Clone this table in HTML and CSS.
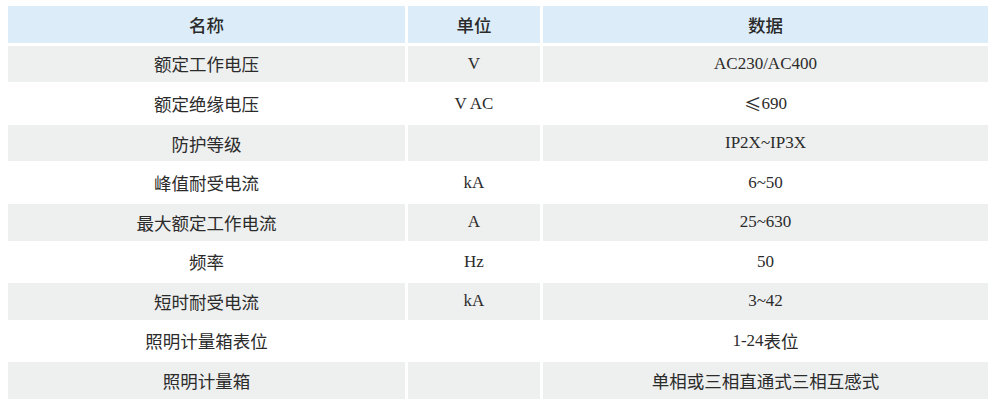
FILE: index.html
```
<!DOCTYPE html>
<html lang="zh-CN">
<head>
<meta charset="utf-8">
<link rel="stylesheet" href="styles.css">
</head>
<body>
<div class="spec">
  <div class="cell head"><span class="zh">名称</span></div><div class="cell head"><span class="zh">单位</span></div><div class="cell head"><span class="zh">数据</span></div>
  <div class="cell grey"><span class="zh">额定工作电压</span></div><div class="cell grey">V</div><div class="cell grey">AC230/AC400</div>
  <div class="cell"><span class="zh">额定绝缘电压</span></div><div class="cell">V AC</div><div class="cell"><span class="zh">≤</span>690</div>
  <div class="cell grey"><span class="zh">防护等级</span></div><div class="cell grey"></div><div class="cell grey">IP2X~IP3X</div>
  <div class="cell"><span class="zh">峰值耐受电流</span></div><div class="cell">kA</div><div class="cell">6~50</div>
  <div class="cell grey"><span class="zh">最大额定工作电流</span></div><div class="cell grey">A</div><div class="cell grey">25~630</div>
  <div class="cell"><span class="zh">频率</span></div><div class="cell">Hz</div><div class="cell">50</div>
  <div class="cell grey"><span class="zh">短时耐受电流</span></div><div class="cell grey">kA</div><div class="cell grey">3~42</div>
  <div class="cell"><span class="zh">照明计量箱表位</span></div><div class="cell"></div><div class="cell">1-24<span class="zh">表位</span></div>
  <div class="cell grey"><span class="zh">照明计量箱</span></div><div class="cell grey"></div><div class="cell grey"><span class="zh">单相或三相直通式三相互感式</span></div>
</div>
</body>
</html>
```
FILE: styles.css
```
html, body {
  margin: 0;
  padding: 0;
  background: #ffffff;
}
body {
  padding: 6px 0 0 8px;
  font-family: "Liberation Serif", "Noto Sans CJK SC", serif;
  font-size: 17px;
  color: #2b2b2b;
}
.spec {
  display: grid;
  width: 980px;
  grid-template-columns: 397px 132px 1fr;
  grid-auto-rows: 36.7px;
  gap: 2.9px 3px;
}
.cell {
  display: flex;
  align-items: center;
  justify-content: center;
  background: #ffffff;
  white-space: nowrap;
}
.zh {
  font-family: "Noto Sans CJK SC", sans-serif;
  font-size: 17.5px;
}
.grey {
  background: #eeefef;
}
.head {
  background: #dcedf9;
  font-weight: 500;
  color: #2a2a2a;
}
```
